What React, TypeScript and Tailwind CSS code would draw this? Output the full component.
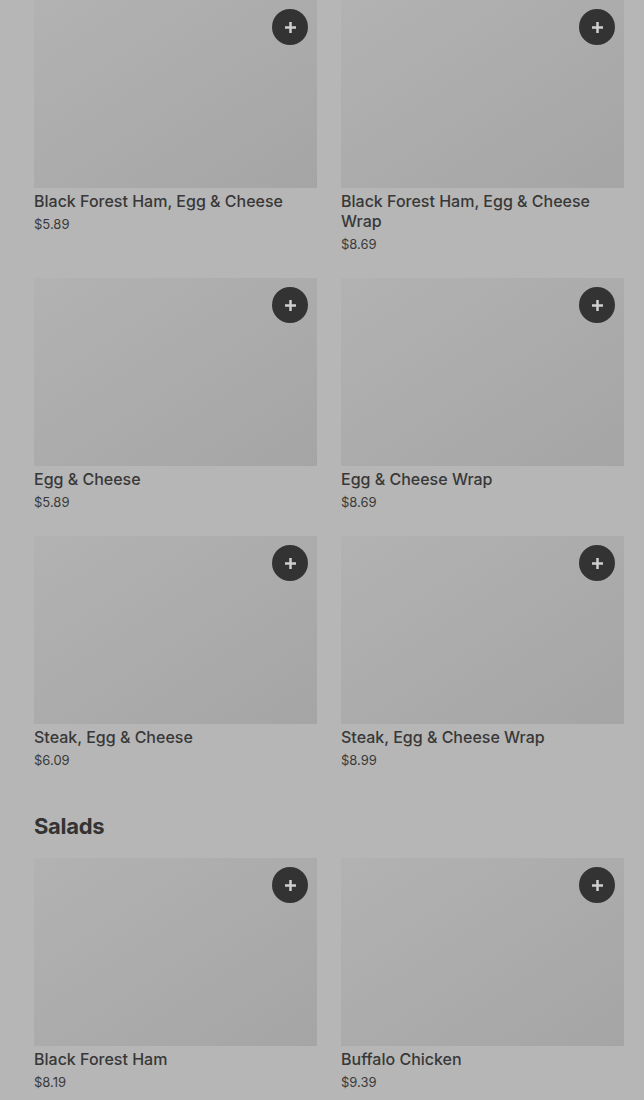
const breakfast = [
  { name: "Black Forest Ham, Egg & Cheese", price: "$5.89" },
  { name: "Black Forest Ham, Egg & Cheese Wrap", price: "$8.69" },
  { name: "Egg & Cheese", price: "$5.89" },
  { name: "Egg & Cheese Wrap", price: "$8.69" },
  { name: "Steak, Egg & Cheese", price: "$6.09" },
  { name: "Steak, Egg & Cheese Wrap", price: "$8.99" },
];

const salads = [
  { name: "Black Forest Ham", price: "$8.19" },
  { name: "Buffalo Chicken", price: "$9.39" },
];

function ItemCard({ name, price }: { name: string; price: string }) {
  return (
    <div className="flex flex-col">
      <div className="relative h-[188px] w-full bg-gradient-to-br from-[#b2b2b2] to-[#a5a5a5]">
        <button className="absolute right-[9px] top-[9px] flex h-9 w-9 items-center justify-center rounded-full bg-[#333333]">
          <svg width="13" height="13" viewBox="0 0 13 13" fill="none">
            <path d="M6.5 1v11M1 6.5h11" stroke="#d0d0d0" strokeWidth="2.5" />
          </svg>
        </button>
      </div>
      <p className="mt-[3px] text-[16px] font-medium leading-5 text-[#383838]">{name}</p>
      <p className="mt-[3px] text-[13px] leading-5 text-[#3a3a3a]">{price}</p>
    </div>
  );
}

export default function App() {
  return (
    <div className="min-h-[1100px] bg-[#b6b6b6] pl-[34px] pr-5 font-['Inter',sans-serif]">
      <div className="grid grid-cols-2 gap-x-6 gap-y-6">
        {breakfast.map((item) => (
          <ItemCard key={item.name} {...item} />
        ))}
      </div>

      <h2 className="mt-[42px] text-[22px] font-bold leading-7 tracking-[-0.3px] text-[#333333]">Salads</h2>

      <div className="mt-[18px] grid grid-cols-2 gap-x-6 gap-y-6">
        {salads.map((item) => (
          <ItemCard key={item.name} {...item} />
        ))}
      </div>
    </div>
  );
}
